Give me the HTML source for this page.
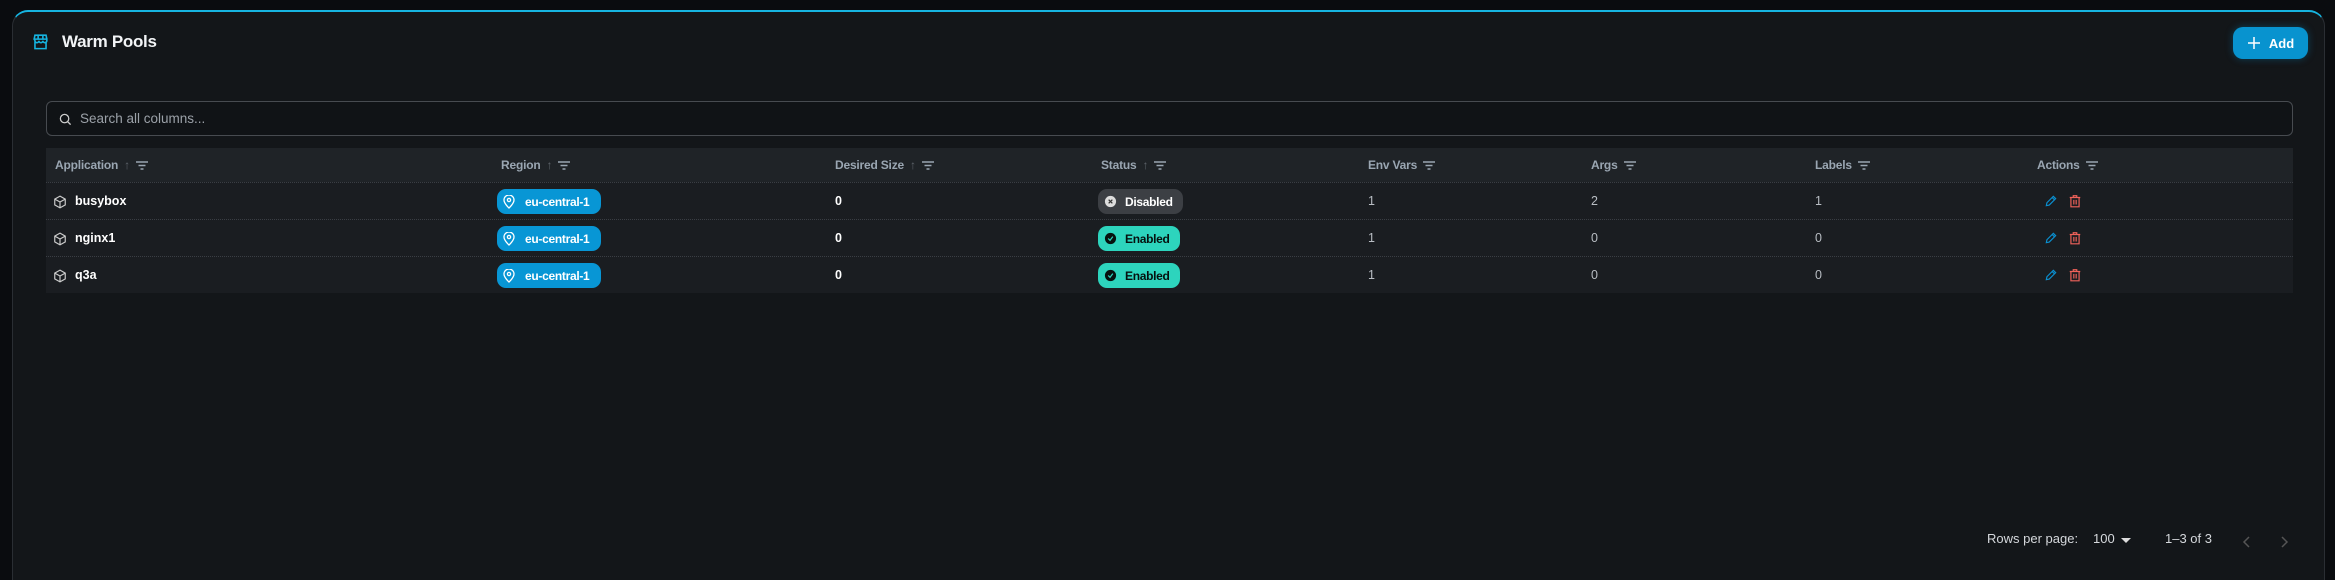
<!DOCTYPE html>
<html><head><meta charset="utf-8"><style>
*{box-sizing:border-box;margin:0;padding:0}
body{width:2335px;height:568px;background:#0a0c0f;font-family:"Liberation Sans",sans-serif;overflow:hidden;position:relative;color:#e8eaed}
.card{position:absolute;left:12px;top:10px;width:2313px;height:570px;background:#131619;border-top:2px solid #16b4e0;border-left:1px solid #2a2e33;border-right:1px solid #2a2e33;border-radius:16px 16px 0 0}
.abs{position:absolute}
.title{left:49px;top:20px;font-size:17px;font-weight:bold;color:#f2f4f6;letter-spacing:-0.3px}
.add{left:2220px;top:15px;width:75px;height:32px;background:#0893cf;border-radius:10px;color:#fff;font-weight:bold;font-size:13px;display:flex;align-items:center;justify-content:center;gap:8px;box-shadow:0 0 8px rgba(8,147,207,.35)}
.search{left:33px;top:89px;width:2247px;height:35px;border:1px solid #474b50;border-radius:6px;background:#101316}
.search span{position:absolute;left:33px;top:9px;font-size:13.5px;color:#9ba1a8}
.table{left:33px;top:136px;width:2247px}
.hdr{height:34px;background:#1f2327;position:relative}
.row{height:37px;background:#1a1d21;position:relative;border-top:1px dotted #3a3e44}
.row:first-of-type{border-top:none}
.h{position:absolute;top:10px;font-size:12px;font-weight:bold;color:#9aa6b2;display:flex;align-items:center;gap:6px;white-space:nowrap;letter-spacing:-0.2px}
.c{position:absolute;top:11px;font-size:12.5px;color:#b8bdc3}
.b{font-weight:bold;color:#fff}
.pill{position:absolute;top:6px;height:25px;border-radius:9px;display:flex;align-items:center;gap:8px;padding:0 8px 0 6px;font-size:12px;font-weight:bold;white-space:nowrap;letter-spacing:-0.3px}
.reg{background:#0896d5;color:#fff;width:104px;gap:10px}
.dis{background:#3c3f44;color:#fff;width:85px}
.en{background:#2dd4bd;color:#06110f;width:82px}
.foot{top:531px;font-size:13px;color:#d5d8dc}
.ar{color:#5d636a;font-weight:normal}
</style></head><body>
<div class="card">
 <svg class="abs" style="left:18px;top:20px" width="19" height="19" viewBox="0 0 24 24" fill="none" stroke="#16b4e0" stroke-width="2"><path d="M3 9h18M4 9l1-5h14l1 5v2a2.5 2.5 0 0 1-5 0 2.5 2.5 0 0 1-5 0 2.5 2.5 0 0 1-5 0zM5 12v9h14v-9M9 4v5M15 4v5"/></svg>
 <div class="abs title">Warm Pools</div>
 <div class="abs add"><svg width="14" height="14" viewBox="0 0 14 14" stroke="#fff" stroke-width="1.5"><path d="M7 1v12M1 7h12"/></svg>Add</div>
 <div class="abs search"><svg class="abs" style="left:12px;top:11px" width="13" height="13" viewBox="0 0 14 14" fill="none" stroke="#ccc" stroke-width="1.4"><circle cx="6" cy="6" r="4.5"/><path d="M9.5 9.5l3 3"/></svg><span>Search all columns...</span></div>
 <div class="abs table">
  <div class="hdr">
   <div class="h" style="left:9px">Application <span class="ar">↑</span> <svg width="12" height="9" viewBox="0 0 12 9" stroke="#9aa6b2" stroke-width="1.4"><path d="M0 1h12M2.5 4.5h7M4.5 8h3"/></svg></div>
   <div class="h" style="left:455px">Region <span class="ar">↑</span> <svg width="12" height="9" viewBox="0 0 12 9" stroke="#9aa6b2" stroke-width="1.4"><path d="M0 1h12M2.5 4.5h7M4.5 8h3"/></svg></div>
   <div class="h" style="left:789px">Desired Size <span class="ar">↑</span> <svg width="12" height="9" viewBox="0 0 12 9" stroke="#9aa6b2" stroke-width="1.4"><path d="M0 1h12M2.5 4.5h7M4.5 8h3"/></svg></div>
   <div class="h" style="left:1055px">Status <span class="ar">↑</span> <svg width="12" height="9" viewBox="0 0 12 9" stroke="#9aa6b2" stroke-width="1.4"><path d="M0 1h12M2.5 4.5h7M4.5 8h3"/></svg></div>
   <div class="h" style="left:1322px">Env Vars <svg width="12" height="9" viewBox="0 0 12 9" stroke="#9aa6b2" stroke-width="1.4"><path d="M0 1h12M2.5 4.5h7M4.5 8h3"/></svg></div>
   <div class="h" style="left:1545px">Args <svg width="12" height="9" viewBox="0 0 12 9" stroke="#9aa6b2" stroke-width="1.4"><path d="M0 1h12M2.5 4.5h7M4.5 8h3"/></svg></div>
   <div class="h" style="left:1769px">Labels <svg width="12" height="9" viewBox="0 0 12 9" stroke="#9aa6b2" stroke-width="1.4"><path d="M0 1h12M2.5 4.5h7M4.5 8h3"/></svg></div>
   <div class="h" style="left:1991px">Actions <svg width="12" height="9" viewBox="0 0 12 9" stroke="#9aa6b2" stroke-width="1.4"><path d="M0 1h12M2.5 4.5h7M4.5 8h3"/></svg></div>
  </div>
  <div class="row">
   <svg class="abs" style="left:7px;top:12px" width="14" height="14" viewBox="0 0 24 24" fill="none" stroke="#ccc" stroke-width="2"><path d="M12 2l9 5v10l-9 5-9-5V7zM3 7l9 5 9-5M12 12v10"/></svg>
   <div class="c b" style="left:29px">busybox</div>
   <div class="pill reg" style="left:451px"><svg width="12" height="14" viewBox="0 0 12 14" fill="none" stroke="#fff" stroke-width="1.3"><path d="M6 13s-5-4.5-5-8a5 5 0 0 1 10 0c0 3.5-5 8-5 8z"/><circle cx="6" cy="5" r="1.6"/></svg>eu-central-1</div>
   <div class="c b" style="left:789px">0</div>
   <div class="pill dis" style="left:1052px"><svg width="13" height="13" viewBox="0 0 14 14"><circle cx="7" cy="7" r="6" fill="#ddd"/><path d="M5 5l4 4M9 5l-4 4" stroke="#333" stroke-width="1.3"/></svg>Disabled</div>
   <div class="c" style="left:1322px">1</div><div class="c" style="left:1545px">2</div><div class="c" style="left:1769px">1</div>
   <svg class="abs" style="left:1998px;top:11px" width="14" height="14" viewBox="0 0 24 24" fill="none" stroke="#0a8fd0" stroke-width="2"><path d="M4 20l1-5L16 4l4 4L9 19zM14 6l4 4"/></svg>
   <svg class="abs" style="left:2022px;top:10px" width="14" height="16" viewBox="0 0 24 24" fill="none" stroke="#f0625a" stroke-width="2"><path d="M3 6h18M9 6V3h6v3M5 6h14v16H5zM10 10v8M14 10v8"/></svg>
  </div>
  <div class="row">
   <svg class="abs" style="left:7px;top:12px" width="14" height="14" viewBox="0 0 24 24" fill="none" stroke="#ccc" stroke-width="2"><path d="M12 2l9 5v10l-9 5-9-5V7zM3 7l9 5 9-5M12 12v10"/></svg>
   <div class="c b" style="left:29px">nginx1</div>
   <div class="pill reg" style="left:451px"><svg width="12" height="14" viewBox="0 0 12 14" fill="none" stroke="#fff" stroke-width="1.3"><path d="M6 13s-5-4.5-5-8a5 5 0 0 1 10 0c0 3.5-5 8-5 8z"/><circle cx="6" cy="5" r="1.6"/></svg>eu-central-1</div>
   <div class="c b" style="left:789px">0</div>
   <div class="pill en" style="left:1052px"><svg width="13" height="13" viewBox="0 0 14 14"><circle cx="7" cy="7" r="6" fill="#06110f"/><path d="M4.5 7l2 2 3-4" stroke="#2dd4bd" stroke-width="1.3" fill="none"/></svg>Enabled</div>
   <div class="c" style="left:1322px">1</div><div class="c" style="left:1545px">0</div><div class="c" style="left:1769px">0</div>
   <svg class="abs" style="left:1998px;top:11px" width="14" height="14" viewBox="0 0 24 24" fill="none" stroke="#0a8fd0" stroke-width="2"><path d="M4 20l1-5L16 4l4 4L9 19zM14 6l4 4"/></svg>
   <svg class="abs" style="left:2022px;top:10px" width="14" height="16" viewBox="0 0 24 24" fill="none" stroke="#f0625a" stroke-width="2"><path d="M3 6h18M9 6V3h6v3M5 6h14v16H5zM10 10v8M14 10v8"/></svg>
  </div>
  <div class="row">
   <svg class="abs" style="left:7px;top:12px" width="14" height="14" viewBox="0 0 24 24" fill="none" stroke="#ccc" stroke-width="2"><path d="M12 2l9 5v10l-9 5-9-5V7zM3 7l9 5 9-5M12 12v10"/></svg>
   <div class="c b" style="left:29px">q3a</div>
   <div class="pill reg" style="left:451px"><svg width="12" height="14" viewBox="0 0 12 14" fill="none" stroke="#fff" stroke-width="1.3"><path d="M6 13s-5-4.5-5-8a5 5 0 0 1 10 0c0 3.5-5 8-5 8z"/><circle cx="6" cy="5" r="1.6"/></svg>eu-central-1</div>
   <div class="c b" style="left:789px">0</div>
   <div class="pill en" style="left:1052px"><svg width="13" height="13" viewBox="0 0 14 14"><circle cx="7" cy="7" r="6" fill="#06110f"/><path d="M4.5 7l2 2 3-4" stroke="#2dd4bd" stroke-width="1.3" fill="none"/></svg>Enabled</div>
   <div class="c" style="left:1322px">1</div><div class="c" style="left:1545px">0</div><div class="c" style="left:1769px">0</div>
   <svg class="abs" style="left:1998px;top:11px" width="14" height="14" viewBox="0 0 24 24" fill="none" stroke="#0a8fd0" stroke-width="2"><path d="M4 20l1-5L16 4l4 4L9 19zM14 6l4 4"/></svg>
   <svg class="abs" style="left:2022px;top:10px" width="14" height="16" viewBox="0 0 24 24" fill="none" stroke="#f0625a" stroke-width="2"><path d="M3 6h18M9 6V3h6v3M5 6h14v16H5zM10 10v8M14 10v8"/></svg>
  </div>
 </div>
</div>
<div class="abs foot" style="left:1987px">Rows per page:</div>
<div class="abs foot" style="left:2093px">100</div>
<svg class="abs" style="left:2121px;top:538px" width="10" height="6" viewBox="0 0 10 6"><path d="M0 0h10L5 5z" fill="#ddd"/></svg>
<div class="abs foot" style="left:2165px">1–3 of 3</div>
<svg class="abs" style="left:2242px;top:535px" width="10" height="14" viewBox="0 0 10 14" fill="none" stroke="#555" stroke-width="1.5"><path d="M7 2L2 7l5 5"/></svg>
<svg class="abs" style="left:2279px;top:535px" width="10" height="14" viewBox="0 0 10 14" fill="none" stroke="#555" stroke-width="1.5"><path d="M3 2l5 5-5 5"/></svg>
</body></html>
